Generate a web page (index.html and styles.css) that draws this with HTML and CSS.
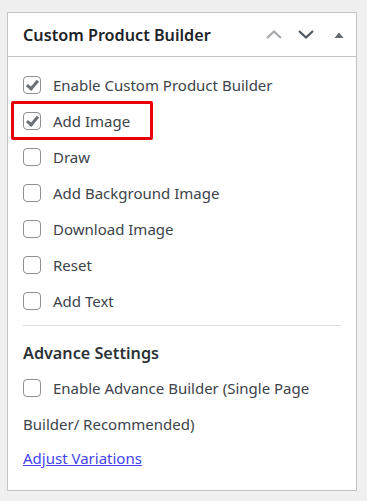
FILE: index.html
```html
<!DOCTYPE html>
<html lang="en">
<head>
    <meta charset="UTF-8">
    <meta name="viewport" content="width=device-width, initial-scale=1.0">
    <title>Custom Product Builder</title>
    <link rel="stylesheet" href="styles.css">
</head>
<body>
    <div class="postbox">
        <!-- header -->
        <div class="postbox-header">
            <h2 class="postbox-title">Custom Product Builder</h2>
            <div class="handle-actions">
                <span class="handle up">
                    <svg width="16" height="9" viewBox="0 0 16 9"><path d="M1 8 L8 1.5 L15 8" fill="none" stroke="currentColor" stroke-width="2.2"/></svg>
                </span>
                <span class="handle down">
                    <svg width="16" height="9" viewBox="0 0 16 9"><path d="M1 1 L8 7.5 L15 1" fill="none" stroke="currentColor" stroke-width="2.2"/></svg>
                </span>
                <span class="handle toggle">
                    <svg width="10" height="6" viewBox="0 0 10 6"><path d="M0.5 6 L5 0.5 L9.5 6 Z" fill="currentColor"/></svg>
                </span>
            </div>
        </div>

        <!-- options -->
        <div class="inside">
            <label class="option"><span class="box checked"></span>Enable Custom Product Builder</label>
            <label class="option highlight"><span class="box checked"></span>Add Image</label>
            <label class="option"><span class="box"></span>Draw</label>
            <label class="option"><span class="box"></span>Add Background Image</label>
            <label class="option"><span class="box"></span>Download Image</label>
            <label class="option"><span class="box"></span>Reset</label>
            <label class="option"><span class="box"></span>Add Text</label>

            <hr class="divider">

            <h3 class="section-title">Advance Settings</h3>
            <label class="option"><span class="box"></span>Enable Advance Builder (Single Page</label>
            <p class="wrap-line">Builder/ Recommended)</p>
            <a class="adjust-link" href="#">Adjust Variations</a>
        </div>
    </div>
</body>
</html>
```

FILE: styles.css
```css
body {
    margin: 0;
    padding: 12px 10px 0 7px;
    background-color: #f0f0f1;
    font-family: "Noto Sans", "Open Sans", Arial, sans-serif;
    color: #2c3338;
}

.postbox {
    width: 348px;
    height: 477px;
    background-color: #fff;
    border: 1px solid #c3c4c7;
    box-shadow: 0 1px 1px rgba(0, 0, 0, 0.04);
}

.postbox-header {
    display: flex;
    align-items: center;
    justify-content: space-between;
    height: 43px;
    border-bottom: 1px solid #c3c4c7;
    padding: 0 0 0 15px;
}

.postbox-title {
    margin: 0;
    font-size: 16.2px;
    font-weight: 600;
    color: #1d2327;
}

.handle-actions {
    display: flex;
    align-items: center;
}

.handle {
    display: flex;
    align-items: center;
    justify-content: center;
    width: 32px;
    height: 36px;
}

.handle.up {
    color: #a7aaad;
}

.handle.down {
    color: #50575e;
}

.handle.toggle {
    width: 34px;
    color: #646970;
}

/* content area */
.inside {
    padding: 10px 15px 0 15px;
}

.option {
    display: flex;
    align-items: center;
    height: 36px;
    font-size: 15px;
    color: #3c434a;
}

.box {
    position: relative;
    box-sizing: border-box;
    width: 18px;
    height: 18px;
    border: 1px solid #8c8f94;
    border-radius: 4px;
    margin-right: 12px;
    flex-shrink: 0;
}

.box.checked::after {
    content: "";
    position: absolute;
    left: 5px;
    top: 1px;
    width: 4px;
    height: 9px;
    border-right: 3px solid #6b7075;
    border-bottom: 3px solid #6b7075;
    transform: rotate(40deg);
}

/* red highlight round "Add Image" */
.option.highlight {
    box-sizing: border-box;
    width: 142px;
    height: 39px;
    margin: -2px 0 -1px -12px;
    padding-left: 9px;
    border: 3px solid #e8000b;
    border-radius: 2px;
}

.divider {
    border: none;
    border-top: 1px solid #dcdcde;
    margin: 6px 0 0 0;
}

.section-title {
    margin: 16px 0 6px 0;
    font-size: 16.2px;
    font-weight: 600;
    color: #2c3338;
}

.wrap-line {
    margin: 8px 0 0 0;
    font-size: 15px;
    color: #3c434a;
}

.adjust-link {
    display: inline-block;
    margin-top: 14px;
    font-size: 15px;
    color: #4343f0;
}
```
